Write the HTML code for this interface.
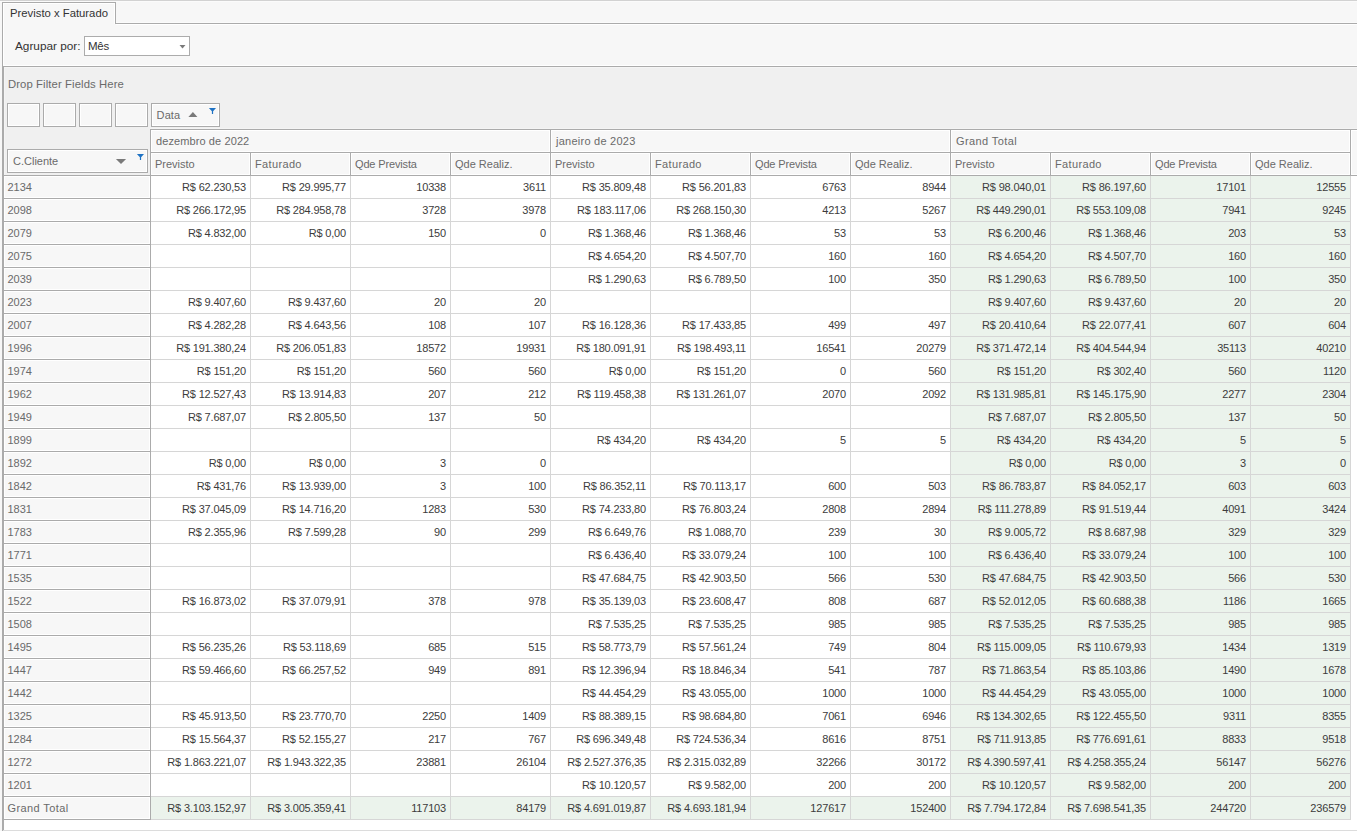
<!DOCTYPE html>
<html><head><meta charset="utf-8"><style>
*{margin:0;padding:0;box-sizing:border-box}
html,body{width:1357px;height:831px;overflow:hidden;background:#f7f7f7;font-family:"Liberation Sans",sans-serif}
body>div,#g div{position:absolute}
.t{white-space:nowrap;line-height:20px}
.r{text-align:right}
.tab{font-size:11.3px;color:#333333}
.lbl{font-size:11.8px;color:#333333}
.drop{font-size:11.3px;color:#6a6a6a}
.hd{font-size:11px;color:#6a6a6a}
.rh{font-size:11px;color:#6a6a6a}
.gt{font-size:11px;color:#6a6a6a}
.num{font-size:11px;color:#3c3c3c;letter-spacing:-0.18px}
</style></head>
<body>
<div style="left:0px;top:0px;width:1357px;height:1px;background:#d2d2d2"></div><div style="left:0px;top:1px;width:1357px;height:1px;background:#fbfbfb"></div><div style="left:2px;top:2px;width:114px;height:22px;border:1px solid #ababab;border-bottom:none;background:#f7f7f7;box-shadow:inset 1px 1px 0 #fff,inset -1px 0 0 #fff"></div><div style="left:116px;top:22px;width:1241px;height:1px;background:#fbfbfb"></div><div style="left:116px;top:23px;width:1241px;height:1px;background:#ababab"></div><div style="left:116px;top:24px;width:1241px;height:1px;background:#fff"></div><div style="left:2px;top:23px;width:1px;height:808px;background:#ababab"></div><div style="left:3px;top:24px;width:1px;height:42px;background:#fff"></div><div class="t tab" style="left:10px;top:3px;">Previsto x Faturado</div><div class="t lbl" style="left:15px;top:36px;">Agrupar por:</div><div style="left:84px;top:36px;width:106px;height:20px;border:1px solid #acacac;background:#fff"></div><div class="t lbl" style="left:88px;top:36px;font-size:11.5px;letter-spacing:-0.3px;">Mês</div><svg style="position:absolute;left:179px;top:45px" width="7" height="4"><path d="M0.5 0H6.5L3.5 3.5Z" fill="#7a7a7a"/></svg><div style="left:3px;top:65px;width:1354px;height:1px;background:#fff"></div><div style="left:3px;top:66px;width:1354px;height:1px;background:#ababab"></div><div style="left:3px;top:67px;width:1354px;height:764px;background:#f0f0f0"></div><div style="left:3px;top:66px;width:1px;height:765px;background:#ababab"></div><div style="left:4px;top:67px;width:1353px;height:1px;background:#f5f5f5"></div><div style="left:4px;top:67px;width:1px;height:764px;background:#f5f5f5"></div><div class="t drop" style="left:8px;top:74px;letter-spacing:0.1px;">Drop Filter Fields Here</div><div style="left:7px;top:103px;width:33px;height:24px;border:1px solid #ababab;background:#f7f7f7;box-shadow:inset 0 0 0 1px #fff"></div><div style="left:43px;top:103px;width:33px;height:24px;border:1px solid #ababab;background:#f7f7f7;box-shadow:inset 0 0 0 1px #fff"></div><div style="left:79px;top:103px;width:33px;height:24px;border:1px solid #ababab;background:#f7f7f7;box-shadow:inset 0 0 0 1px #fff"></div><div style="left:115px;top:103px;width:33px;height:24px;border:1px solid #ababab;background:#f7f7f7;box-shadow:inset 0 0 0 1px #fff"></div><div style="left:151px;top:103px;width:69px;height:24px;border:1px solid #ababab;background:#f7f7f7;box-shadow:inset 0 0 0 1px #fff"></div><div class="t hd" style="left:156.6px;top:105px;letter-spacing:0.1px;">Data</div><svg style="position:absolute;left:188px;top:112px" width="10" height="6"><path d="M0.4 5H9.4L4.9 0Z" fill="#7a7a7a"/></svg><svg style="position:absolute;left:208px;top:108px" width="8" height="7"><path d="M0.9 0H8.1L5.1 3.2V6H3.9V3.2Z" fill="#1e72c4"/></svg><div style="left:7px;top:149px;width:141px;height:24px;border:1px solid #ababab;background:#f7f7f7;box-shadow:inset 0 0 0 1px #fff"></div><div class="t hd" style="left:13px;top:151px;">C.Cliente</div><svg style="position:absolute;left:115px;top:159px" width="12" height="6"><path d="M0.9 0H11.1L6 5Z" fill="#7a7a7a"/></svg><svg style="position:absolute;left:136px;top:154px" width="8" height="7"><path d="M0.9 0H8.1L5.1 3.2V6H3.9V3.2Z" fill="#1e72c4"/></svg><div style="left:150px;top:128px;width:1207px;height:1px;background:#f4f4f4"></div><div style="left:150px;top:129px;width:1207px;height:47px;background:#ababab"></div><div style="left:151px;top:130px;width:399px;height:22px;background:#f7f7f7;box-shadow:inset 0 0 0 1px #fff"></div><div style="left:551px;top:130px;width:399px;height:22px;background:#f7f7f7;box-shadow:inset 0 0 0 1px #fff"></div><div style="left:951px;top:130px;width:399px;height:22px;background:#f7f7f7;box-shadow:inset 0 0 0 1px #fff"></div><div style="left:151px;top:153px;width:99px;height:22px;background:#f7f7f7;box-shadow:inset 0 0 0 1px #fff"></div><div style="left:251px;top:153px;width:99px;height:22px;background:#f7f7f7;box-shadow:inset 0 0 0 1px #fff"></div><div style="left:351px;top:153px;width:99px;height:22px;background:#f7f7f7;box-shadow:inset 0 0 0 1px #fff"></div><div style="left:451px;top:153px;width:99px;height:22px;background:#f7f7f7;box-shadow:inset 0 0 0 1px #fff"></div><div style="left:551px;top:153px;width:99px;height:22px;background:#f7f7f7;box-shadow:inset 0 0 0 1px #fff"></div><div style="left:651px;top:153px;width:99px;height:22px;background:#f7f7f7;box-shadow:inset 0 0 0 1px #fff"></div><div style="left:751px;top:153px;width:99px;height:22px;background:#f7f7f7;box-shadow:inset 0 0 0 1px #fff"></div><div style="left:851px;top:153px;width:99px;height:22px;background:#f7f7f7;box-shadow:inset 0 0 0 1px #fff"></div><div style="left:951px;top:153px;width:99px;height:22px;background:#f7f7f7;box-shadow:inset 0 0 0 1px #fff"></div><div style="left:1051px;top:153px;width:99px;height:22px;background:#f7f7f7;box-shadow:inset 0 0 0 1px #fff"></div><div style="left:1151px;top:153px;width:99px;height:22px;background:#f7f7f7;box-shadow:inset 0 0 0 1px #fff"></div><div style="left:1251px;top:153px;width:99px;height:22px;background:#f7f7f7;box-shadow:inset 0 0 0 1px #fff"></div><div style="left:1351px;top:130px;width:12px;height:45px;background:#f7f7f7;box-shadow:inset 0 0 0 1px #fff"></div><div style="left:3px;top:175px;width:1354px;height:1px;background:#ababab"></div><div class="t hd" style="left:156px;top:131px;letter-spacing:0.1px;">dezembro de 2022</div><div class="t hd" style="left:556px;top:131px;letter-spacing:0.25px;">janeiro de 2023</div><div class="t hd" style="left:956px;top:131px;letter-spacing:0.4px;">Grand Total</div><div class="t hd" style="left:155px;top:154px;">Previsto</div><div class="t hd" style="left:255px;top:154px;letter-spacing:0.35px;">Faturado</div><div class="t hd" style="left:355px;top:154px;letter-spacing:-0.15px;">Qde Prevista</div><div class="t hd" style="left:455px;top:154px;">Qde Realiz.</div><div class="t hd" style="left:555px;top:154px;">Previsto</div><div class="t hd" style="left:655px;top:154px;letter-spacing:0.35px;">Faturado</div><div class="t hd" style="left:755px;top:154px;letter-spacing:-0.15px;">Qde Prevista</div><div class="t hd" style="left:855px;top:154px;">Qde Realiz.</div><div class="t hd" style="left:955px;top:154px;">Previsto</div><div class="t hd" style="left:1055px;top:154px;letter-spacing:0.35px;">Faturado</div><div class="t hd" style="left:1155px;top:154px;letter-spacing:-0.15px;">Qde Prevista</div><div class="t hd" style="left:1255px;top:154px;">Qde Realiz.</div><div style="left:3px;top:176px;width:148px;height:644px;background:#ababab"></div><div style="left:4px;top:176px;width:146px;height:22px;background:#f7f7f7;box-shadow:inset 0 0 0 1px #fff"></div><div style="left:4px;top:199px;width:146px;height:22px;background:#f7f7f7;box-shadow:inset 0 0 0 1px #fff"></div><div style="left:4px;top:222px;width:146px;height:22px;background:#f7f7f7;box-shadow:inset 0 0 0 1px #fff"></div><div style="left:4px;top:245px;width:146px;height:22px;background:#f7f7f7;box-shadow:inset 0 0 0 1px #fff"></div><div style="left:4px;top:268px;width:146px;height:22px;background:#f7f7f7;box-shadow:inset 0 0 0 1px #fff"></div><div style="left:4px;top:291px;width:146px;height:22px;background:#f7f7f7;box-shadow:inset 0 0 0 1px #fff"></div><div style="left:4px;top:314px;width:146px;height:22px;background:#f7f7f7;box-shadow:inset 0 0 0 1px #fff"></div><div style="left:4px;top:337px;width:146px;height:22px;background:#f7f7f7;box-shadow:inset 0 0 0 1px #fff"></div><div style="left:4px;top:360px;width:146px;height:22px;background:#f7f7f7;box-shadow:inset 0 0 0 1px #fff"></div><div style="left:4px;top:383px;width:146px;height:22px;background:#f7f7f7;box-shadow:inset 0 0 0 1px #fff"></div><div style="left:4px;top:406px;width:146px;height:22px;background:#f7f7f7;box-shadow:inset 0 0 0 1px #fff"></div><div style="left:4px;top:429px;width:146px;height:22px;background:#f7f7f7;box-shadow:inset 0 0 0 1px #fff"></div><div style="left:4px;top:452px;width:146px;height:22px;background:#f7f7f7;box-shadow:inset 0 0 0 1px #fff"></div><div style="left:4px;top:475px;width:146px;height:22px;background:#f7f7f7;box-shadow:inset 0 0 0 1px #fff"></div><div style="left:4px;top:498px;width:146px;height:22px;background:#f7f7f7;box-shadow:inset 0 0 0 1px #fff"></div><div style="left:4px;top:521px;width:146px;height:22px;background:#f7f7f7;box-shadow:inset 0 0 0 1px #fff"></div><div style="left:4px;top:544px;width:146px;height:22px;background:#f7f7f7;box-shadow:inset 0 0 0 1px #fff"></div><div style="left:4px;top:567px;width:146px;height:22px;background:#f7f7f7;box-shadow:inset 0 0 0 1px #fff"></div><div style="left:4px;top:590px;width:146px;height:22px;background:#f7f7f7;box-shadow:inset 0 0 0 1px #fff"></div><div style="left:4px;top:613px;width:146px;height:22px;background:#f7f7f7;box-shadow:inset 0 0 0 1px #fff"></div><div style="left:4px;top:636px;width:146px;height:22px;background:#f7f7f7;box-shadow:inset 0 0 0 1px #fff"></div><div style="left:4px;top:659px;width:146px;height:22px;background:#f7f7f7;box-shadow:inset 0 0 0 1px #fff"></div><div style="left:4px;top:682px;width:146px;height:22px;background:#f7f7f7;box-shadow:inset 0 0 0 1px #fff"></div><div style="left:4px;top:705px;width:146px;height:22px;background:#f7f7f7;box-shadow:inset 0 0 0 1px #fff"></div><div style="left:4px;top:728px;width:146px;height:22px;background:#f7f7f7;box-shadow:inset 0 0 0 1px #fff"></div><div style="left:4px;top:751px;width:146px;height:22px;background:#f7f7f7;box-shadow:inset 0 0 0 1px #fff"></div><div style="left:4px;top:774px;width:146px;height:22px;background:#f7f7f7;box-shadow:inset 0 0 0 1px #fff"></div><div style="left:4px;top:797px;width:146px;height:22px;background:#f7f7f7;box-shadow:inset 0 0 0 1px #fff"></div><div style="left:151px;top:176px;width:1200px;height:644px;background:#d6d6d6"></div><div style="left:151px;top:176px;width:99px;height:22px;background:#fff"></div><div style="left:251px;top:176px;width:99px;height:22px;background:#fff"></div><div style="left:351px;top:176px;width:99px;height:22px;background:#fff"></div><div style="left:451px;top:176px;width:99px;height:22px;background:#fff"></div><div style="left:551px;top:176px;width:99px;height:22px;background:#fff"></div><div style="left:651px;top:176px;width:99px;height:22px;background:#fff"></div><div style="left:751px;top:176px;width:99px;height:22px;background:#fff"></div><div style="left:851px;top:176px;width:99px;height:22px;background:#fff"></div><div style="left:951px;top:176px;width:99px;height:22px;background:#ebf3ec"></div><div style="left:1051px;top:176px;width:99px;height:22px;background:#ebf3ec"></div><div style="left:1151px;top:176px;width:99px;height:22px;background:#ebf3ec"></div><div style="left:1251px;top:176px;width:99px;height:22px;background:#ebf3ec"></div><div style="left:151px;top:199px;width:99px;height:22px;background:#fff"></div><div style="left:251px;top:199px;width:99px;height:22px;background:#fff"></div><div style="left:351px;top:199px;width:99px;height:22px;background:#fff"></div><div style="left:451px;top:199px;width:99px;height:22px;background:#fff"></div><div style="left:551px;top:199px;width:99px;height:22px;background:#fff"></div><div style="left:651px;top:199px;width:99px;height:22px;background:#fff"></div><div style="left:751px;top:199px;width:99px;height:22px;background:#fff"></div><div style="left:851px;top:199px;width:99px;height:22px;background:#fff"></div><div style="left:951px;top:199px;width:99px;height:22px;background:#ebf3ec"></div><div style="left:1051px;top:199px;width:99px;height:22px;background:#ebf3ec"></div><div style="left:1151px;top:199px;width:99px;height:22px;background:#ebf3ec"></div><div style="left:1251px;top:199px;width:99px;height:22px;background:#ebf3ec"></div><div style="left:151px;top:222px;width:99px;height:22px;background:#fff"></div><div style="left:251px;top:222px;width:99px;height:22px;background:#fff"></div><div style="left:351px;top:222px;width:99px;height:22px;background:#fff"></div><div style="left:451px;top:222px;width:99px;height:22px;background:#fff"></div><div style="left:551px;top:222px;width:99px;height:22px;background:#fff"></div><div style="left:651px;top:222px;width:99px;height:22px;background:#fff"></div><div style="left:751px;top:222px;width:99px;height:22px;background:#fff"></div><div style="left:851px;top:222px;width:99px;height:22px;background:#fff"></div><div style="left:951px;top:222px;width:99px;height:22px;background:#ebf3ec"></div><div style="left:1051px;top:222px;width:99px;height:22px;background:#ebf3ec"></div><div style="left:1151px;top:222px;width:99px;height:22px;background:#ebf3ec"></div><div style="left:1251px;top:222px;width:99px;height:22px;background:#ebf3ec"></div><div style="left:151px;top:245px;width:99px;height:22px;background:#fff"></div><div style="left:251px;top:245px;width:99px;height:22px;background:#fff"></div><div style="left:351px;top:245px;width:99px;height:22px;background:#fff"></div><div style="left:451px;top:245px;width:99px;height:22px;background:#fff"></div><div style="left:551px;top:245px;width:99px;height:22px;background:#fff"></div><div style="left:651px;top:245px;width:99px;height:22px;background:#fff"></div><div style="left:751px;top:245px;width:99px;height:22px;background:#fff"></div><div style="left:851px;top:245px;width:99px;height:22px;background:#fff"></div><div style="left:951px;top:245px;width:99px;height:22px;background:#ebf3ec"></div><div style="left:1051px;top:245px;width:99px;height:22px;background:#ebf3ec"></div><div style="left:1151px;top:245px;width:99px;height:22px;background:#ebf3ec"></div><div style="left:1251px;top:245px;width:99px;height:22px;background:#ebf3ec"></div><div style="left:151px;top:268px;width:99px;height:22px;background:#fff"></div><div style="left:251px;top:268px;width:99px;height:22px;background:#fff"></div><div style="left:351px;top:268px;width:99px;height:22px;background:#fff"></div><div style="left:451px;top:268px;width:99px;height:22px;background:#fff"></div><div style="left:551px;top:268px;width:99px;height:22px;background:#fff"></div><div style="left:651px;top:268px;width:99px;height:22px;background:#fff"></div><div style="left:751px;top:268px;width:99px;height:22px;background:#fff"></div><div style="left:851px;top:268px;width:99px;height:22px;background:#fff"></div><div style="left:951px;top:268px;width:99px;height:22px;background:#ebf3ec"></div><div style="left:1051px;top:268px;width:99px;height:22px;background:#ebf3ec"></div><div style="left:1151px;top:268px;width:99px;height:22px;background:#ebf3ec"></div><div style="left:1251px;top:268px;width:99px;height:22px;background:#ebf3ec"></div><div style="left:151px;top:291px;width:99px;height:22px;background:#fff"></div><div style="left:251px;top:291px;width:99px;height:22px;background:#fff"></div><div style="left:351px;top:291px;width:99px;height:22px;background:#fff"></div><div style="left:451px;top:291px;width:99px;height:22px;background:#fff"></div><div style="left:551px;top:291px;width:99px;height:22px;background:#fff"></div><div style="left:651px;top:291px;width:99px;height:22px;background:#fff"></div><div style="left:751px;top:291px;width:99px;height:22px;background:#fff"></div><div style="left:851px;top:291px;width:99px;height:22px;background:#fff"></div><div style="left:951px;top:291px;width:99px;height:22px;background:#ebf3ec"></div><div style="left:1051px;top:291px;width:99px;height:22px;background:#ebf3ec"></div><div style="left:1151px;top:291px;width:99px;height:22px;background:#ebf3ec"></div><div style="left:1251px;top:291px;width:99px;height:22px;background:#ebf3ec"></div><div style="left:151px;top:314px;width:99px;height:22px;background:#fff"></div><div style="left:251px;top:314px;width:99px;height:22px;background:#fff"></div><div style="left:351px;top:314px;width:99px;height:22px;background:#fff"></div><div style="left:451px;top:314px;width:99px;height:22px;background:#fff"></div><div style="left:551px;top:314px;width:99px;height:22px;background:#fff"></div><div style="left:651px;top:314px;width:99px;height:22px;background:#fff"></div><div style="left:751px;top:314px;width:99px;height:22px;background:#fff"></div><div style="left:851px;top:314px;width:99px;height:22px;background:#fff"></div><div style="left:951px;top:314px;width:99px;height:22px;background:#ebf3ec"></div><div style="left:1051px;top:314px;width:99px;height:22px;background:#ebf3ec"></div><div style="left:1151px;top:314px;width:99px;height:22px;background:#ebf3ec"></div><div style="left:1251px;top:314px;width:99px;height:22px;background:#ebf3ec"></div><div style="left:151px;top:337px;width:99px;height:22px;background:#fff"></div><div style="left:251px;top:337px;width:99px;height:22px;background:#fff"></div><div style="left:351px;top:337px;width:99px;height:22px;background:#fff"></div><div style="left:451px;top:337px;width:99px;height:22px;background:#fff"></div><div style="left:551px;top:337px;width:99px;height:22px;background:#fff"></div><div style="left:651px;top:337px;width:99px;height:22px;background:#fff"></div><div style="left:751px;top:337px;width:99px;height:22px;background:#fff"></div><div style="left:851px;top:337px;width:99px;height:22px;background:#fff"></div><div style="left:951px;top:337px;width:99px;height:22px;background:#ebf3ec"></div><div style="left:1051px;top:337px;width:99px;height:22px;background:#ebf3ec"></div><div style="left:1151px;top:337px;width:99px;height:22px;background:#ebf3ec"></div><div style="left:1251px;top:337px;width:99px;height:22px;background:#ebf3ec"></div><div style="left:151px;top:360px;width:99px;height:22px;background:#fff"></div><div style="left:251px;top:360px;width:99px;height:22px;background:#fff"></div><div style="left:351px;top:360px;width:99px;height:22px;background:#fff"></div><div style="left:451px;top:360px;width:99px;height:22px;background:#fff"></div><div style="left:551px;top:360px;width:99px;height:22px;background:#fff"></div><div style="left:651px;top:360px;width:99px;height:22px;background:#fff"></div><div style="left:751px;top:360px;width:99px;height:22px;background:#fff"></div><div style="left:851px;top:360px;width:99px;height:22px;background:#fff"></div><div style="left:951px;top:360px;width:99px;height:22px;background:#ebf3ec"></div><div style="left:1051px;top:360px;width:99px;height:22px;background:#ebf3ec"></div><div style="left:1151px;top:360px;width:99px;height:22px;background:#ebf3ec"></div><div style="left:1251px;top:360px;width:99px;height:22px;background:#ebf3ec"></div><div style="left:151px;top:383px;width:99px;height:22px;background:#fff"></div><div style="left:251px;top:383px;width:99px;height:22px;background:#fff"></div><div style="left:351px;top:383px;width:99px;height:22px;background:#fff"></div><div style="left:451px;top:383px;width:99px;height:22px;background:#fff"></div><div style="left:551px;top:383px;width:99px;height:22px;background:#fff"></div><div style="left:651px;top:383px;width:99px;height:22px;background:#fff"></div><div style="left:751px;top:383px;width:99px;height:22px;background:#fff"></div><div style="left:851px;top:383px;width:99px;height:22px;background:#fff"></div><div style="left:951px;top:383px;width:99px;height:22px;background:#ebf3ec"></div><div style="left:1051px;top:383px;width:99px;height:22px;background:#ebf3ec"></div><div style="left:1151px;top:383px;width:99px;height:22px;background:#ebf3ec"></div><div style="left:1251px;top:383px;width:99px;height:22px;background:#ebf3ec"></div><div style="left:151px;top:406px;width:99px;height:22px;background:#fff"></div><div style="left:251px;top:406px;width:99px;height:22px;background:#fff"></div><div style="left:351px;top:406px;width:99px;height:22px;background:#fff"></div><div style="left:451px;top:406px;width:99px;height:22px;background:#fff"></div><div style="left:551px;top:406px;width:99px;height:22px;background:#fff"></div><div style="left:651px;top:406px;width:99px;height:22px;background:#fff"></div><div style="left:751px;top:406px;width:99px;height:22px;background:#fff"></div><div style="left:851px;top:406px;width:99px;height:22px;background:#fff"></div><div style="left:951px;top:406px;width:99px;height:22px;background:#ebf3ec"></div><div style="left:1051px;top:406px;width:99px;height:22px;background:#ebf3ec"></div><div style="left:1151px;top:406px;width:99px;height:22px;background:#ebf3ec"></div><div style="left:1251px;top:406px;width:99px;height:22px;background:#ebf3ec"></div><div style="left:151px;top:429px;width:99px;height:22px;background:#fff"></div><div style="left:251px;top:429px;width:99px;height:22px;background:#fff"></div><div style="left:351px;top:429px;width:99px;height:22px;background:#fff"></div><div style="left:451px;top:429px;width:99px;height:22px;background:#fff"></div><div style="left:551px;top:429px;width:99px;height:22px;background:#fff"></div><div style="left:651px;top:429px;width:99px;height:22px;background:#fff"></div><div style="left:751px;top:429px;width:99px;height:22px;background:#fff"></div><div style="left:851px;top:429px;width:99px;height:22px;background:#fff"></div><div style="left:951px;top:429px;width:99px;height:22px;background:#ebf3ec"></div><div style="left:1051px;top:429px;width:99px;height:22px;background:#ebf3ec"></div><div style="left:1151px;top:429px;width:99px;height:22px;background:#ebf3ec"></div><div style="left:1251px;top:429px;width:99px;height:22px;background:#ebf3ec"></div><div style="left:151px;top:452px;width:99px;height:22px;background:#fff"></div><div style="left:251px;top:452px;width:99px;height:22px;background:#fff"></div><div style="left:351px;top:452px;width:99px;height:22px;background:#fff"></div><div style="left:451px;top:452px;width:99px;height:22px;background:#fff"></div><div style="left:551px;top:452px;width:99px;height:22px;background:#fff"></div><div style="left:651px;top:452px;width:99px;height:22px;background:#fff"></div><div style="left:751px;top:452px;width:99px;height:22px;background:#fff"></div><div style="left:851px;top:452px;width:99px;height:22px;background:#fff"></div><div style="left:951px;top:452px;width:99px;height:22px;background:#ebf3ec"></div><div style="left:1051px;top:452px;width:99px;height:22px;background:#ebf3ec"></div><div style="left:1151px;top:452px;width:99px;height:22px;background:#ebf3ec"></div><div style="left:1251px;top:452px;width:99px;height:22px;background:#ebf3ec"></div><div style="left:151px;top:475px;width:99px;height:22px;background:#fff"></div><div style="left:251px;top:475px;width:99px;height:22px;background:#fff"></div><div style="left:351px;top:475px;width:99px;height:22px;background:#fff"></div><div style="left:451px;top:475px;width:99px;height:22px;background:#fff"></div><div style="left:551px;top:475px;width:99px;height:22px;background:#fff"></div><div style="left:651px;top:475px;width:99px;height:22px;background:#fff"></div><div style="left:751px;top:475px;width:99px;height:22px;background:#fff"></div><div style="left:851px;top:475px;width:99px;height:22px;background:#fff"></div><div style="left:951px;top:475px;width:99px;height:22px;background:#ebf3ec"></div><div style="left:1051px;top:475px;width:99px;height:22px;background:#ebf3ec"></div><div style="left:1151px;top:475px;width:99px;height:22px;background:#ebf3ec"></div><div style="left:1251px;top:475px;width:99px;height:22px;background:#ebf3ec"></div><div style="left:151px;top:498px;width:99px;height:22px;background:#fff"></div><div style="left:251px;top:498px;width:99px;height:22px;background:#fff"></div><div style="left:351px;top:498px;width:99px;height:22px;background:#fff"></div><div style="left:451px;top:498px;width:99px;height:22px;background:#fff"></div><div style="left:551px;top:498px;width:99px;height:22px;background:#fff"></div><div style="left:651px;top:498px;width:99px;height:22px;background:#fff"></div><div style="left:751px;top:498px;width:99px;height:22px;background:#fff"></div><div style="left:851px;top:498px;width:99px;height:22px;background:#fff"></div><div style="left:951px;top:498px;width:99px;height:22px;background:#ebf3ec"></div><div style="left:1051px;top:498px;width:99px;height:22px;background:#ebf3ec"></div><div style="left:1151px;top:498px;width:99px;height:22px;background:#ebf3ec"></div><div style="left:1251px;top:498px;width:99px;height:22px;background:#ebf3ec"></div><div style="left:151px;top:521px;width:99px;height:22px;background:#fff"></div><div style="left:251px;top:521px;width:99px;height:22px;background:#fff"></div><div style="left:351px;top:521px;width:99px;height:22px;background:#fff"></div><div style="left:451px;top:521px;width:99px;height:22px;background:#fff"></div><div style="left:551px;top:521px;width:99px;height:22px;background:#fff"></div><div style="left:651px;top:521px;width:99px;height:22px;background:#fff"></div><div style="left:751px;top:521px;width:99px;height:22px;background:#fff"></div><div style="left:851px;top:521px;width:99px;height:22px;background:#fff"></div><div style="left:951px;top:521px;width:99px;height:22px;background:#ebf3ec"></div><div style="left:1051px;top:521px;width:99px;height:22px;background:#ebf3ec"></div><div style="left:1151px;top:521px;width:99px;height:22px;background:#ebf3ec"></div><div style="left:1251px;top:521px;width:99px;height:22px;background:#ebf3ec"></div><div style="left:151px;top:544px;width:99px;height:22px;background:#fff"></div><div style="left:251px;top:544px;width:99px;height:22px;background:#fff"></div><div style="left:351px;top:544px;width:99px;height:22px;background:#fff"></div><div style="left:451px;top:544px;width:99px;height:22px;background:#fff"></div><div style="left:551px;top:544px;width:99px;height:22px;background:#fff"></div><div style="left:651px;top:544px;width:99px;height:22px;background:#fff"></div><div style="left:751px;top:544px;width:99px;height:22px;background:#fff"></div><div style="left:851px;top:544px;width:99px;height:22px;background:#fff"></div><div style="left:951px;top:544px;width:99px;height:22px;background:#ebf3ec"></div><div style="left:1051px;top:544px;width:99px;height:22px;background:#ebf3ec"></div><div style="left:1151px;top:544px;width:99px;height:22px;background:#ebf3ec"></div><div style="left:1251px;top:544px;width:99px;height:22px;background:#ebf3ec"></div><div style="left:151px;top:567px;width:99px;height:22px;background:#fff"></div><div style="left:251px;top:567px;width:99px;height:22px;background:#fff"></div><div style="left:351px;top:567px;width:99px;height:22px;background:#fff"></div><div style="left:451px;top:567px;width:99px;height:22px;background:#fff"></div><div style="left:551px;top:567px;width:99px;height:22px;background:#fff"></div><div style="left:651px;top:567px;width:99px;height:22px;background:#fff"></div><div style="left:751px;top:567px;width:99px;height:22px;background:#fff"></div><div style="left:851px;top:567px;width:99px;height:22px;background:#fff"></div><div style="left:951px;top:567px;width:99px;height:22px;background:#ebf3ec"></div><div style="left:1051px;top:567px;width:99px;height:22px;background:#ebf3ec"></div><div style="left:1151px;top:567px;width:99px;height:22px;background:#ebf3ec"></div><div style="left:1251px;top:567px;width:99px;height:22px;background:#ebf3ec"></div><div style="left:151px;top:590px;width:99px;height:22px;background:#fff"></div><div style="left:251px;top:590px;width:99px;height:22px;background:#fff"></div><div style="left:351px;top:590px;width:99px;height:22px;background:#fff"></div><div style="left:451px;top:590px;width:99px;height:22px;background:#fff"></div><div style="left:551px;top:590px;width:99px;height:22px;background:#fff"></div><div style="left:651px;top:590px;width:99px;height:22px;background:#fff"></div><div style="left:751px;top:590px;width:99px;height:22px;background:#fff"></div><div style="left:851px;top:590px;width:99px;height:22px;background:#fff"></div><div style="left:951px;top:590px;width:99px;height:22px;background:#ebf3ec"></div><div style="left:1051px;top:590px;width:99px;height:22px;background:#ebf3ec"></div><div style="left:1151px;top:590px;width:99px;height:22px;background:#ebf3ec"></div><div style="left:1251px;top:590px;width:99px;height:22px;background:#ebf3ec"></div><div style="left:151px;top:613px;width:99px;height:22px;background:#fff"></div><div style="left:251px;top:613px;width:99px;height:22px;background:#fff"></div><div style="left:351px;top:613px;width:99px;height:22px;background:#fff"></div><div style="left:451px;top:613px;width:99px;height:22px;background:#fff"></div><div style="left:551px;top:613px;width:99px;height:22px;background:#fff"></div><div style="left:651px;top:613px;width:99px;height:22px;background:#fff"></div><div style="left:751px;top:613px;width:99px;height:22px;background:#fff"></div><div style="left:851px;top:613px;width:99px;height:22px;background:#fff"></div><div style="left:951px;top:613px;width:99px;height:22px;background:#ebf3ec"></div><div style="left:1051px;top:613px;width:99px;height:22px;background:#ebf3ec"></div><div style="left:1151px;top:613px;width:99px;height:22px;background:#ebf3ec"></div><div style="left:1251px;top:613px;width:99px;height:22px;background:#ebf3ec"></div><div style="left:151px;top:636px;width:99px;height:22px;background:#fff"></div><div style="left:251px;top:636px;width:99px;height:22px;background:#fff"></div><div style="left:351px;top:636px;width:99px;height:22px;background:#fff"></div><div style="left:451px;top:636px;width:99px;height:22px;background:#fff"></div><div style="left:551px;top:636px;width:99px;height:22px;background:#fff"></div><div style="left:651px;top:636px;width:99px;height:22px;background:#fff"></div><div style="left:751px;top:636px;width:99px;height:22px;background:#fff"></div><div style="left:851px;top:636px;width:99px;height:22px;background:#fff"></div><div style="left:951px;top:636px;width:99px;height:22px;background:#ebf3ec"></div><div style="left:1051px;top:636px;width:99px;height:22px;background:#ebf3ec"></div><div style="left:1151px;top:636px;width:99px;height:22px;background:#ebf3ec"></div><div style="left:1251px;top:636px;width:99px;height:22px;background:#ebf3ec"></div><div style="left:151px;top:659px;width:99px;height:22px;background:#fff"></div><div style="left:251px;top:659px;width:99px;height:22px;background:#fff"></div><div style="left:351px;top:659px;width:99px;height:22px;background:#fff"></div><div style="left:451px;top:659px;width:99px;height:22px;background:#fff"></div><div style="left:551px;top:659px;width:99px;height:22px;background:#fff"></div><div style="left:651px;top:659px;width:99px;height:22px;background:#fff"></div><div style="left:751px;top:659px;width:99px;height:22px;background:#fff"></div><div style="left:851px;top:659px;width:99px;height:22px;background:#fff"></div><div style="left:951px;top:659px;width:99px;height:22px;background:#ebf3ec"></div><div style="left:1051px;top:659px;width:99px;height:22px;background:#ebf3ec"></div><div style="left:1151px;top:659px;width:99px;height:22px;background:#ebf3ec"></div><div style="left:1251px;top:659px;width:99px;height:22px;background:#ebf3ec"></div><div style="left:151px;top:682px;width:99px;height:22px;background:#fff"></div><div style="left:251px;top:682px;width:99px;height:22px;background:#fff"></div><div style="left:351px;top:682px;width:99px;height:22px;background:#fff"></div><div style="left:451px;top:682px;width:99px;height:22px;background:#fff"></div><div style="left:551px;top:682px;width:99px;height:22px;background:#fff"></div><div style="left:651px;top:682px;width:99px;height:22px;background:#fff"></div><div style="left:751px;top:682px;width:99px;height:22px;background:#fff"></div><div style="left:851px;top:682px;width:99px;height:22px;background:#fff"></div><div style="left:951px;top:682px;width:99px;height:22px;background:#ebf3ec"></div><div style="left:1051px;top:682px;width:99px;height:22px;background:#ebf3ec"></div><div style="left:1151px;top:682px;width:99px;height:22px;background:#ebf3ec"></div><div style="left:1251px;top:682px;width:99px;height:22px;background:#ebf3ec"></div><div style="left:151px;top:705px;width:99px;height:22px;background:#fff"></div><div style="left:251px;top:705px;width:99px;height:22px;background:#fff"></div><div style="left:351px;top:705px;width:99px;height:22px;background:#fff"></div><div style="left:451px;top:705px;width:99px;height:22px;background:#fff"></div><div style="left:551px;top:705px;width:99px;height:22px;background:#fff"></div><div style="left:651px;top:705px;width:99px;height:22px;background:#fff"></div><div style="left:751px;top:705px;width:99px;height:22px;background:#fff"></div><div style="left:851px;top:705px;width:99px;height:22px;background:#fff"></div><div style="left:951px;top:705px;width:99px;height:22px;background:#ebf3ec"></div><div style="left:1051px;top:705px;width:99px;height:22px;background:#ebf3ec"></div><div style="left:1151px;top:705px;width:99px;height:22px;background:#ebf3ec"></div><div style="left:1251px;top:705px;width:99px;height:22px;background:#ebf3ec"></div><div style="left:151px;top:728px;width:99px;height:22px;background:#fff"></div><div style="left:251px;top:728px;width:99px;height:22px;background:#fff"></div><div style="left:351px;top:728px;width:99px;height:22px;background:#fff"></div><div style="left:451px;top:728px;width:99px;height:22px;background:#fff"></div><div style="left:551px;top:728px;width:99px;height:22px;background:#fff"></div><div style="left:651px;top:728px;width:99px;height:22px;background:#fff"></div><div style="left:751px;top:728px;width:99px;height:22px;background:#fff"></div><div style="left:851px;top:728px;width:99px;height:22px;background:#fff"></div><div style="left:951px;top:728px;width:99px;height:22px;background:#ebf3ec"></div><div style="left:1051px;top:728px;width:99px;height:22px;background:#ebf3ec"></div><div style="left:1151px;top:728px;width:99px;height:22px;background:#ebf3ec"></div><div style="left:1251px;top:728px;width:99px;height:22px;background:#ebf3ec"></div><div style="left:151px;top:751px;width:99px;height:22px;background:#fff"></div><div style="left:251px;top:751px;width:99px;height:22px;background:#fff"></div><div style="left:351px;top:751px;width:99px;height:22px;background:#fff"></div><div style="left:451px;top:751px;width:99px;height:22px;background:#fff"></div><div style="left:551px;top:751px;width:99px;height:22px;background:#fff"></div><div style="left:651px;top:751px;width:99px;height:22px;background:#fff"></div><div style="left:751px;top:751px;width:99px;height:22px;background:#fff"></div><div style="left:851px;top:751px;width:99px;height:22px;background:#fff"></div><div style="left:951px;top:751px;width:99px;height:22px;background:#ebf3ec"></div><div style="left:1051px;top:751px;width:99px;height:22px;background:#ebf3ec"></div><div style="left:1151px;top:751px;width:99px;height:22px;background:#ebf3ec"></div><div style="left:1251px;top:751px;width:99px;height:22px;background:#ebf3ec"></div><div style="left:151px;top:774px;width:99px;height:22px;background:#fff"></div><div style="left:251px;top:774px;width:99px;height:22px;background:#fff"></div><div style="left:351px;top:774px;width:99px;height:22px;background:#fff"></div><div style="left:451px;top:774px;width:99px;height:22px;background:#fff"></div><div style="left:551px;top:774px;width:99px;height:22px;background:#fff"></div><div style="left:651px;top:774px;width:99px;height:22px;background:#fff"></div><div style="left:751px;top:774px;width:99px;height:22px;background:#fff"></div><div style="left:851px;top:774px;width:99px;height:22px;background:#fff"></div><div style="left:951px;top:774px;width:99px;height:22px;background:#ebf3ec"></div><div style="left:1051px;top:774px;width:99px;height:22px;background:#ebf3ec"></div><div style="left:1151px;top:774px;width:99px;height:22px;background:#ebf3ec"></div><div style="left:1251px;top:774px;width:99px;height:22px;background:#ebf3ec"></div><div style="left:151px;top:797px;width:99px;height:22px;background:#ebf3ec"></div><div style="left:251px;top:797px;width:99px;height:22px;background:#ebf3ec"></div><div style="left:351px;top:797px;width:99px;height:22px;background:#ebf3ec"></div><div style="left:451px;top:797px;width:99px;height:22px;background:#ebf3ec"></div><div style="left:551px;top:797px;width:99px;height:22px;background:#ebf3ec"></div><div style="left:651px;top:797px;width:99px;height:22px;background:#ebf3ec"></div><div style="left:751px;top:797px;width:99px;height:22px;background:#ebf3ec"></div><div style="left:851px;top:797px;width:99px;height:22px;background:#ebf3ec"></div><div style="left:951px;top:797px;width:99px;height:22px;background:#ebf3ec"></div><div style="left:1051px;top:797px;width:99px;height:22px;background:#ebf3ec"></div><div style="left:1151px;top:797px;width:99px;height:22px;background:#ebf3ec"></div><div style="left:1251px;top:797px;width:99px;height:22px;background:#ebf3ec"></div><div style="left:1351px;top:176px;width:6px;height:644px;background:#fff"></div><div style="left:4px;top:820px;width:1353px;height:10px;background:#fff"></div><div style="left:3px;top:830px;width:1354px;height:1px;background:#dcdcdc"></div><div class="t rh" style="left:7.5px;top:177px;">2134</div><div class="t num r" style="left:46px;top:177px;width:200px;">R$ 62.230,53</div><div class="t num r" style="left:146px;top:177px;width:200px;">R$ 29.995,77</div><div class="t num r" style="left:246px;top:177px;width:200px;">10338</div><div class="t num r" style="left:346px;top:177px;width:200px;">3611</div><div class="t num r" style="left:446px;top:177px;width:200px;">R$ 35.809,48</div><div class="t num r" style="left:546px;top:177px;width:200px;">R$ 56.201,83</div><div class="t num r" style="left:646px;top:177px;width:200px;">6763</div><div class="t num r" style="left:746px;top:177px;width:200px;">8944</div><div class="t num r" style="left:846px;top:177px;width:200px;">R$ 98.040,01</div><div class="t num r" style="left:946px;top:177px;width:200px;">R$ 86.197,60</div><div class="t num r" style="left:1046px;top:177px;width:200px;">17101</div><div class="t num r" style="left:1146px;top:177px;width:200px;">12555</div><div class="t rh" style="left:7.5px;top:200px;">2098</div><div class="t num r" style="left:46px;top:200px;width:200px;">R$ 266.172,95</div><div class="t num r" style="left:146px;top:200px;width:200px;">R$ 284.958,78</div><div class="t num r" style="left:246px;top:200px;width:200px;">3728</div><div class="t num r" style="left:346px;top:200px;width:200px;">3978</div><div class="t num r" style="left:446px;top:200px;width:200px;">R$ 183.117,06</div><div class="t num r" style="left:546px;top:200px;width:200px;">R$ 268.150,30</div><div class="t num r" style="left:646px;top:200px;width:200px;">4213</div><div class="t num r" style="left:746px;top:200px;width:200px;">5267</div><div class="t num r" style="left:846px;top:200px;width:200px;">R$ 449.290,01</div><div class="t num r" style="left:946px;top:200px;width:200px;">R$ 553.109,08</div><div class="t num r" style="left:1046px;top:200px;width:200px;">7941</div><div class="t num r" style="left:1146px;top:200px;width:200px;">9245</div><div class="t rh" style="left:7.5px;top:223px;">2079</div><div class="t num r" style="left:46px;top:223px;width:200px;">R$ 4.832,00</div><div class="t num r" style="left:146px;top:223px;width:200px;">R$ 0,00</div><div class="t num r" style="left:246px;top:223px;width:200px;">150</div><div class="t num r" style="left:346px;top:223px;width:200px;">0</div><div class="t num r" style="left:446px;top:223px;width:200px;">R$ 1.368,46</div><div class="t num r" style="left:546px;top:223px;width:200px;">R$ 1.368,46</div><div class="t num r" style="left:646px;top:223px;width:200px;">53</div><div class="t num r" style="left:746px;top:223px;width:200px;">53</div><div class="t num r" style="left:846px;top:223px;width:200px;">R$ 6.200,46</div><div class="t num r" style="left:946px;top:223px;width:200px;">R$ 1.368,46</div><div class="t num r" style="left:1046px;top:223px;width:200px;">203</div><div class="t num r" style="left:1146px;top:223px;width:200px;">53</div><div class="t rh" style="left:7.5px;top:246px;">2075</div><div class="t num r" style="left:446px;top:246px;width:200px;">R$ 4.654,20</div><div class="t num r" style="left:546px;top:246px;width:200px;">R$ 4.507,70</div><div class="t num r" style="left:646px;top:246px;width:200px;">160</div><div class="t num r" style="left:746px;top:246px;width:200px;">160</div><div class="t num r" style="left:846px;top:246px;width:200px;">R$ 4.654,20</div><div class="t num r" style="left:946px;top:246px;width:200px;">R$ 4.507,70</div><div class="t num r" style="left:1046px;top:246px;width:200px;">160</div><div class="t num r" style="left:1146px;top:246px;width:200px;">160</div><div class="t rh" style="left:7.5px;top:269px;">2039</div><div class="t num r" style="left:446px;top:269px;width:200px;">R$ 1.290,63</div><div class="t num r" style="left:546px;top:269px;width:200px;">R$ 6.789,50</div><div class="t num r" style="left:646px;top:269px;width:200px;">100</div><div class="t num r" style="left:746px;top:269px;width:200px;">350</div><div class="t num r" style="left:846px;top:269px;width:200px;">R$ 1.290,63</div><div class="t num r" style="left:946px;top:269px;width:200px;">R$ 6.789,50</div><div class="t num r" style="left:1046px;top:269px;width:200px;">100</div><div class="t num r" style="left:1146px;top:269px;width:200px;">350</div><div class="t rh" style="left:7.5px;top:292px;">2023</div><div class="t num r" style="left:46px;top:292px;width:200px;">R$ 9.407,60</div><div class="t num r" style="left:146px;top:292px;width:200px;">R$ 9.437,60</div><div class="t num r" style="left:246px;top:292px;width:200px;">20</div><div class="t num r" style="left:346px;top:292px;width:200px;">20</div><div class="t num r" style="left:846px;top:292px;width:200px;">R$ 9.407,60</div><div class="t num r" style="left:946px;top:292px;width:200px;">R$ 9.437,60</div><div class="t num r" style="left:1046px;top:292px;width:200px;">20</div><div class="t num r" style="left:1146px;top:292px;width:200px;">20</div><div class="t rh" style="left:7.5px;top:315px;">2007</div><div class="t num r" style="left:46px;top:315px;width:200px;">R$ 4.282,28</div><div class="t num r" style="left:146px;top:315px;width:200px;">R$ 4.643,56</div><div class="t num r" style="left:246px;top:315px;width:200px;">108</div><div class="t num r" style="left:346px;top:315px;width:200px;">107</div><div class="t num r" style="left:446px;top:315px;width:200px;">R$ 16.128,36</div><div class="t num r" style="left:546px;top:315px;width:200px;">R$ 17.433,85</div><div class="t num r" style="left:646px;top:315px;width:200px;">499</div><div class="t num r" style="left:746px;top:315px;width:200px;">497</div><div class="t num r" style="left:846px;top:315px;width:200px;">R$ 20.410,64</div><div class="t num r" style="left:946px;top:315px;width:200px;">R$ 22.077,41</div><div class="t num r" style="left:1046px;top:315px;width:200px;">607</div><div class="t num r" style="left:1146px;top:315px;width:200px;">604</div><div class="t rh" style="left:7.5px;top:338px;">1996</div><div class="t num r" style="left:46px;top:338px;width:200px;">R$ 191.380,24</div><div class="t num r" style="left:146px;top:338px;width:200px;">R$ 206.051,83</div><div class="t num r" style="left:246px;top:338px;width:200px;">18572</div><div class="t num r" style="left:346px;top:338px;width:200px;">19931</div><div class="t num r" style="left:446px;top:338px;width:200px;">R$ 180.091,91</div><div class="t num r" style="left:546px;top:338px;width:200px;">R$ 198.493,11</div><div class="t num r" style="left:646px;top:338px;width:200px;">16541</div><div class="t num r" style="left:746px;top:338px;width:200px;">20279</div><div class="t num r" style="left:846px;top:338px;width:200px;">R$ 371.472,14</div><div class="t num r" style="left:946px;top:338px;width:200px;">R$ 404.544,94</div><div class="t num r" style="left:1046px;top:338px;width:200px;">35113</div><div class="t num r" style="left:1146px;top:338px;width:200px;">40210</div><div class="t rh" style="left:7.5px;top:361px;">1974</div><div class="t num r" style="left:46px;top:361px;width:200px;">R$ 151,20</div><div class="t num r" style="left:146px;top:361px;width:200px;">R$ 151,20</div><div class="t num r" style="left:246px;top:361px;width:200px;">560</div><div class="t num r" style="left:346px;top:361px;width:200px;">560</div><div class="t num r" style="left:446px;top:361px;width:200px;">R$ 0,00</div><div class="t num r" style="left:546px;top:361px;width:200px;">R$ 151,20</div><div class="t num r" style="left:646px;top:361px;width:200px;">0</div><div class="t num r" style="left:746px;top:361px;width:200px;">560</div><div class="t num r" style="left:846px;top:361px;width:200px;">R$ 151,20</div><div class="t num r" style="left:946px;top:361px;width:200px;">R$ 302,40</div><div class="t num r" style="left:1046px;top:361px;width:200px;">560</div><div class="t num r" style="left:1146px;top:361px;width:200px;">1120</div><div class="t rh" style="left:7.5px;top:384px;">1962</div><div class="t num r" style="left:46px;top:384px;width:200px;">R$ 12.527,43</div><div class="t num r" style="left:146px;top:384px;width:200px;">R$ 13.914,83</div><div class="t num r" style="left:246px;top:384px;width:200px;">207</div><div class="t num r" style="left:346px;top:384px;width:200px;">212</div><div class="t num r" style="left:446px;top:384px;width:200px;">R$ 119.458,38</div><div class="t num r" style="left:546px;top:384px;width:200px;">R$ 131.261,07</div><div class="t num r" style="left:646px;top:384px;width:200px;">2070</div><div class="t num r" style="left:746px;top:384px;width:200px;">2092</div><div class="t num r" style="left:846px;top:384px;width:200px;">R$ 131.985,81</div><div class="t num r" style="left:946px;top:384px;width:200px;">R$ 145.175,90</div><div class="t num r" style="left:1046px;top:384px;width:200px;">2277</div><div class="t num r" style="left:1146px;top:384px;width:200px;">2304</div><div class="t rh" style="left:7.5px;top:407px;">1949</div><div class="t num r" style="left:46px;top:407px;width:200px;">R$ 7.687,07</div><div class="t num r" style="left:146px;top:407px;width:200px;">R$ 2.805,50</div><div class="t num r" style="left:246px;top:407px;width:200px;">137</div><div class="t num r" style="left:346px;top:407px;width:200px;">50</div><div class="t num r" style="left:846px;top:407px;width:200px;">R$ 7.687,07</div><div class="t num r" style="left:946px;top:407px;width:200px;">R$ 2.805,50</div><div class="t num r" style="left:1046px;top:407px;width:200px;">137</div><div class="t num r" style="left:1146px;top:407px;width:200px;">50</div><div class="t rh" style="left:7.5px;top:430px;">1899</div><div class="t num r" style="left:446px;top:430px;width:200px;">R$ 434,20</div><div class="t num r" style="left:546px;top:430px;width:200px;">R$ 434,20</div><div class="t num r" style="left:646px;top:430px;width:200px;">5</div><div class="t num r" style="left:746px;top:430px;width:200px;">5</div><div class="t num r" style="left:846px;top:430px;width:200px;">R$ 434,20</div><div class="t num r" style="left:946px;top:430px;width:200px;">R$ 434,20</div><div class="t num r" style="left:1046px;top:430px;width:200px;">5</div><div class="t num r" style="left:1146px;top:430px;width:200px;">5</div><div class="t rh" style="left:7.5px;top:453px;">1892</div><div class="t num r" style="left:46px;top:453px;width:200px;">R$ 0,00</div><div class="t num r" style="left:146px;top:453px;width:200px;">R$ 0,00</div><div class="t num r" style="left:246px;top:453px;width:200px;">3</div><div class="t num r" style="left:346px;top:453px;width:200px;">0</div><div class="t num r" style="left:846px;top:453px;width:200px;">R$ 0,00</div><div class="t num r" style="left:946px;top:453px;width:200px;">R$ 0,00</div><div class="t num r" style="left:1046px;top:453px;width:200px;">3</div><div class="t num r" style="left:1146px;top:453px;width:200px;">0</div><div class="t rh" style="left:7.5px;top:476px;">1842</div><div class="t num r" style="left:46px;top:476px;width:200px;">R$ 431,76</div><div class="t num r" style="left:146px;top:476px;width:200px;">R$ 13.939,00</div><div class="t num r" style="left:246px;top:476px;width:200px;">3</div><div class="t num r" style="left:346px;top:476px;width:200px;">100</div><div class="t num r" style="left:446px;top:476px;width:200px;">R$ 86.352,11</div><div class="t num r" style="left:546px;top:476px;width:200px;">R$ 70.113,17</div><div class="t num r" style="left:646px;top:476px;width:200px;">600</div><div class="t num r" style="left:746px;top:476px;width:200px;">503</div><div class="t num r" style="left:846px;top:476px;width:200px;">R$ 86.783,87</div><div class="t num r" style="left:946px;top:476px;width:200px;">R$ 84.052,17</div><div class="t num r" style="left:1046px;top:476px;width:200px;">603</div><div class="t num r" style="left:1146px;top:476px;width:200px;">603</div><div class="t rh" style="left:7.5px;top:499px;">1831</div><div class="t num r" style="left:46px;top:499px;width:200px;">R$ 37.045,09</div><div class="t num r" style="left:146px;top:499px;width:200px;">R$ 14.716,20</div><div class="t num r" style="left:246px;top:499px;width:200px;">1283</div><div class="t num r" style="left:346px;top:499px;width:200px;">530</div><div class="t num r" style="left:446px;top:499px;width:200px;">R$ 74.233,80</div><div class="t num r" style="left:546px;top:499px;width:200px;">R$ 76.803,24</div><div class="t num r" style="left:646px;top:499px;width:200px;">2808</div><div class="t num r" style="left:746px;top:499px;width:200px;">2894</div><div class="t num r" style="left:846px;top:499px;width:200px;">R$ 111.278,89</div><div class="t num r" style="left:946px;top:499px;width:200px;">R$ 91.519,44</div><div class="t num r" style="left:1046px;top:499px;width:200px;">4091</div><div class="t num r" style="left:1146px;top:499px;width:200px;">3424</div><div class="t rh" style="left:7.5px;top:522px;">1783</div><div class="t num r" style="left:46px;top:522px;width:200px;">R$ 2.355,96</div><div class="t num r" style="left:146px;top:522px;width:200px;">R$ 7.599,28</div><div class="t num r" style="left:246px;top:522px;width:200px;">90</div><div class="t num r" style="left:346px;top:522px;width:200px;">299</div><div class="t num r" style="left:446px;top:522px;width:200px;">R$ 6.649,76</div><div class="t num r" style="left:546px;top:522px;width:200px;">R$ 1.088,70</div><div class="t num r" style="left:646px;top:522px;width:200px;">239</div><div class="t num r" style="left:746px;top:522px;width:200px;">30</div><div class="t num r" style="left:846px;top:522px;width:200px;">R$ 9.005,72</div><div class="t num r" style="left:946px;top:522px;width:200px;">R$ 8.687,98</div><div class="t num r" style="left:1046px;top:522px;width:200px;">329</div><div class="t num r" style="left:1146px;top:522px;width:200px;">329</div><div class="t rh" style="left:7.5px;top:545px;">1771</div><div class="t num r" style="left:446px;top:545px;width:200px;">R$ 6.436,40</div><div class="t num r" style="left:546px;top:545px;width:200px;">R$ 33.079,24</div><div class="t num r" style="left:646px;top:545px;width:200px;">100</div><div class="t num r" style="left:746px;top:545px;width:200px;">100</div><div class="t num r" style="left:846px;top:545px;width:200px;">R$ 6.436,40</div><div class="t num r" style="left:946px;top:545px;width:200px;">R$ 33.079,24</div><div class="t num r" style="left:1046px;top:545px;width:200px;">100</div><div class="t num r" style="left:1146px;top:545px;width:200px;">100</div><div class="t rh" style="left:7.5px;top:568px;">1535</div><div class="t num r" style="left:446px;top:568px;width:200px;">R$ 47.684,75</div><div class="t num r" style="left:546px;top:568px;width:200px;">R$ 42.903,50</div><div class="t num r" style="left:646px;top:568px;width:200px;">566</div><div class="t num r" style="left:746px;top:568px;width:200px;">530</div><div class="t num r" style="left:846px;top:568px;width:200px;">R$ 47.684,75</div><div class="t num r" style="left:946px;top:568px;width:200px;">R$ 42.903,50</div><div class="t num r" style="left:1046px;top:568px;width:200px;">566</div><div class="t num r" style="left:1146px;top:568px;width:200px;">530</div><div class="t rh" style="left:7.5px;top:591px;">1522</div><div class="t num r" style="left:46px;top:591px;width:200px;">R$ 16.873,02</div><div class="t num r" style="left:146px;top:591px;width:200px;">R$ 37.079,91</div><div class="t num r" style="left:246px;top:591px;width:200px;">378</div><div class="t num r" style="left:346px;top:591px;width:200px;">978</div><div class="t num r" style="left:446px;top:591px;width:200px;">R$ 35.139,03</div><div class="t num r" style="left:546px;top:591px;width:200px;">R$ 23.608,47</div><div class="t num r" style="left:646px;top:591px;width:200px;">808</div><div class="t num r" style="left:746px;top:591px;width:200px;">687</div><div class="t num r" style="left:846px;top:591px;width:200px;">R$ 52.012,05</div><div class="t num r" style="left:946px;top:591px;width:200px;">R$ 60.688,38</div><div class="t num r" style="left:1046px;top:591px;width:200px;">1186</div><div class="t num r" style="left:1146px;top:591px;width:200px;">1665</div><div class="t rh" style="left:7.5px;top:614px;">1508</div><div class="t num r" style="left:446px;top:614px;width:200px;">R$ 7.535,25</div><div class="t num r" style="left:546px;top:614px;width:200px;">R$ 7.535,25</div><div class="t num r" style="left:646px;top:614px;width:200px;">985</div><div class="t num r" style="left:746px;top:614px;width:200px;">985</div><div class="t num r" style="left:846px;top:614px;width:200px;">R$ 7.535,25</div><div class="t num r" style="left:946px;top:614px;width:200px;">R$ 7.535,25</div><div class="t num r" style="left:1046px;top:614px;width:200px;">985</div><div class="t num r" style="left:1146px;top:614px;width:200px;">985</div><div class="t rh" style="left:7.5px;top:637px;">1495</div><div class="t num r" style="left:46px;top:637px;width:200px;">R$ 56.235,26</div><div class="t num r" style="left:146px;top:637px;width:200px;">R$ 53.118,69</div><div class="t num r" style="left:246px;top:637px;width:200px;">685</div><div class="t num r" style="left:346px;top:637px;width:200px;">515</div><div class="t num r" style="left:446px;top:637px;width:200px;">R$ 58.773,79</div><div class="t num r" style="left:546px;top:637px;width:200px;">R$ 57.561,24</div><div class="t num r" style="left:646px;top:637px;width:200px;">749</div><div class="t num r" style="left:746px;top:637px;width:200px;">804</div><div class="t num r" style="left:846px;top:637px;width:200px;">R$ 115.009,05</div><div class="t num r" style="left:946px;top:637px;width:200px;">R$ 110.679,93</div><div class="t num r" style="left:1046px;top:637px;width:200px;">1434</div><div class="t num r" style="left:1146px;top:637px;width:200px;">1319</div><div class="t rh" style="left:7.5px;top:660px;">1447</div><div class="t num r" style="left:46px;top:660px;width:200px;">R$ 59.466,60</div><div class="t num r" style="left:146px;top:660px;width:200px;">R$ 66.257,52</div><div class="t num r" style="left:246px;top:660px;width:200px;">949</div><div class="t num r" style="left:346px;top:660px;width:200px;">891</div><div class="t num r" style="left:446px;top:660px;width:200px;">R$ 12.396,94</div><div class="t num r" style="left:546px;top:660px;width:200px;">R$ 18.846,34</div><div class="t num r" style="left:646px;top:660px;width:200px;">541</div><div class="t num r" style="left:746px;top:660px;width:200px;">787</div><div class="t num r" style="left:846px;top:660px;width:200px;">R$ 71.863,54</div><div class="t num r" style="left:946px;top:660px;width:200px;">R$ 85.103,86</div><div class="t num r" style="left:1046px;top:660px;width:200px;">1490</div><div class="t num r" style="left:1146px;top:660px;width:200px;">1678</div><div class="t rh" style="left:7.5px;top:683px;">1442</div><div class="t num r" style="left:446px;top:683px;width:200px;">R$ 44.454,29</div><div class="t num r" style="left:546px;top:683px;width:200px;">R$ 43.055,00</div><div class="t num r" style="left:646px;top:683px;width:200px;">1000</div><div class="t num r" style="left:746px;top:683px;width:200px;">1000</div><div class="t num r" style="left:846px;top:683px;width:200px;">R$ 44.454,29</div><div class="t num r" style="left:946px;top:683px;width:200px;">R$ 43.055,00</div><div class="t num r" style="left:1046px;top:683px;width:200px;">1000</div><div class="t num r" style="left:1146px;top:683px;width:200px;">1000</div><div class="t rh" style="left:7.5px;top:706px;">1325</div><div class="t num r" style="left:46px;top:706px;width:200px;">R$ 45.913,50</div><div class="t num r" style="left:146px;top:706px;width:200px;">R$ 23.770,70</div><div class="t num r" style="left:246px;top:706px;width:200px;">2250</div><div class="t num r" style="left:346px;top:706px;width:200px;">1409</div><div class="t num r" style="left:446px;top:706px;width:200px;">R$ 88.389,15</div><div class="t num r" style="left:546px;top:706px;width:200px;">R$ 98.684,80</div><div class="t num r" style="left:646px;top:706px;width:200px;">7061</div><div class="t num r" style="left:746px;top:706px;width:200px;">6946</div><div class="t num r" style="left:846px;top:706px;width:200px;">R$ 134.302,65</div><div class="t num r" style="left:946px;top:706px;width:200px;">R$ 122.455,50</div><div class="t num r" style="left:1046px;top:706px;width:200px;">9311</div><div class="t num r" style="left:1146px;top:706px;width:200px;">8355</div><div class="t rh" style="left:7.5px;top:729px;">1284</div><div class="t num r" style="left:46px;top:729px;width:200px;">R$ 15.564,37</div><div class="t num r" style="left:146px;top:729px;width:200px;">R$ 52.155,27</div><div class="t num r" style="left:246px;top:729px;width:200px;">217</div><div class="t num r" style="left:346px;top:729px;width:200px;">767</div><div class="t num r" style="left:446px;top:729px;width:200px;">R$ 696.349,48</div><div class="t num r" style="left:546px;top:729px;width:200px;">R$ 724.536,34</div><div class="t num r" style="left:646px;top:729px;width:200px;">8616</div><div class="t num r" style="left:746px;top:729px;width:200px;">8751</div><div class="t num r" style="left:846px;top:729px;width:200px;">R$ 711.913,85</div><div class="t num r" style="left:946px;top:729px;width:200px;">R$ 776.691,61</div><div class="t num r" style="left:1046px;top:729px;width:200px;">8833</div><div class="t num r" style="left:1146px;top:729px;width:200px;">9518</div><div class="t rh" style="left:7.5px;top:752px;">1272</div><div class="t num r" style="left:46px;top:752px;width:200px;">R$ 1.863.221,07</div><div class="t num r" style="left:146px;top:752px;width:200px;">R$ 1.943.322,35</div><div class="t num r" style="left:246px;top:752px;width:200px;">23881</div><div class="t num r" style="left:346px;top:752px;width:200px;">26104</div><div class="t num r" style="left:446px;top:752px;width:200px;">R$ 2.527.376,35</div><div class="t num r" style="left:546px;top:752px;width:200px;">R$ 2.315.032,89</div><div class="t num r" style="left:646px;top:752px;width:200px;">32266</div><div class="t num r" style="left:746px;top:752px;width:200px;">30172</div><div class="t num r" style="left:846px;top:752px;width:200px;">R$ 4.390.597,41</div><div class="t num r" style="left:946px;top:752px;width:200px;">R$ 4.258.355,24</div><div class="t num r" style="left:1046px;top:752px;width:200px;">56147</div><div class="t num r" style="left:1146px;top:752px;width:200px;">56276</div><div class="t rh" style="left:7.5px;top:775px;">1201</div><div class="t num r" style="left:446px;top:775px;width:200px;">R$ 10.120,57</div><div class="t num r" style="left:546px;top:775px;width:200px;">R$ 9.582,00</div><div class="t num r" style="left:646px;top:775px;width:200px;">200</div><div class="t num r" style="left:746px;top:775px;width:200px;">200</div><div class="t num r" style="left:846px;top:775px;width:200px;">R$ 10.120,57</div><div class="t num r" style="left:946px;top:775px;width:200px;">R$ 9.582,00</div><div class="t num r" style="left:1046px;top:775px;width:200px;">200</div><div class="t num r" style="left:1146px;top:775px;width:200px;">200</div><div class="t gt" style="left:7.5px;top:798px;letter-spacing:0.4px;">Grand Total</div><div class="t num r" style="left:46px;top:798px;width:200px;">R$ 3.103.152,97</div><div class="t num r" style="left:146px;top:798px;width:200px;">R$ 3.005.359,41</div><div class="t num r" style="left:246px;top:798px;width:200px;">117103</div><div class="t num r" style="left:346px;top:798px;width:200px;">84179</div><div class="t num r" style="left:446px;top:798px;width:200px;">R$ 4.691.019,87</div><div class="t num r" style="left:546px;top:798px;width:200px;">R$ 4.693.181,94</div><div class="t num r" style="left:646px;top:798px;width:200px;">127617</div><div class="t num r" style="left:746px;top:798px;width:200px;">152400</div><div class="t num r" style="left:846px;top:798px;width:200px;">R$ 7.794.172,84</div><div class="t num r" style="left:946px;top:798px;width:200px;">R$ 7.698.541,35</div><div class="t num r" style="left:1046px;top:798px;width:200px;">244720</div><div class="t num r" style="left:1146px;top:798px;width:200px;">236579</div>
</body></html>
